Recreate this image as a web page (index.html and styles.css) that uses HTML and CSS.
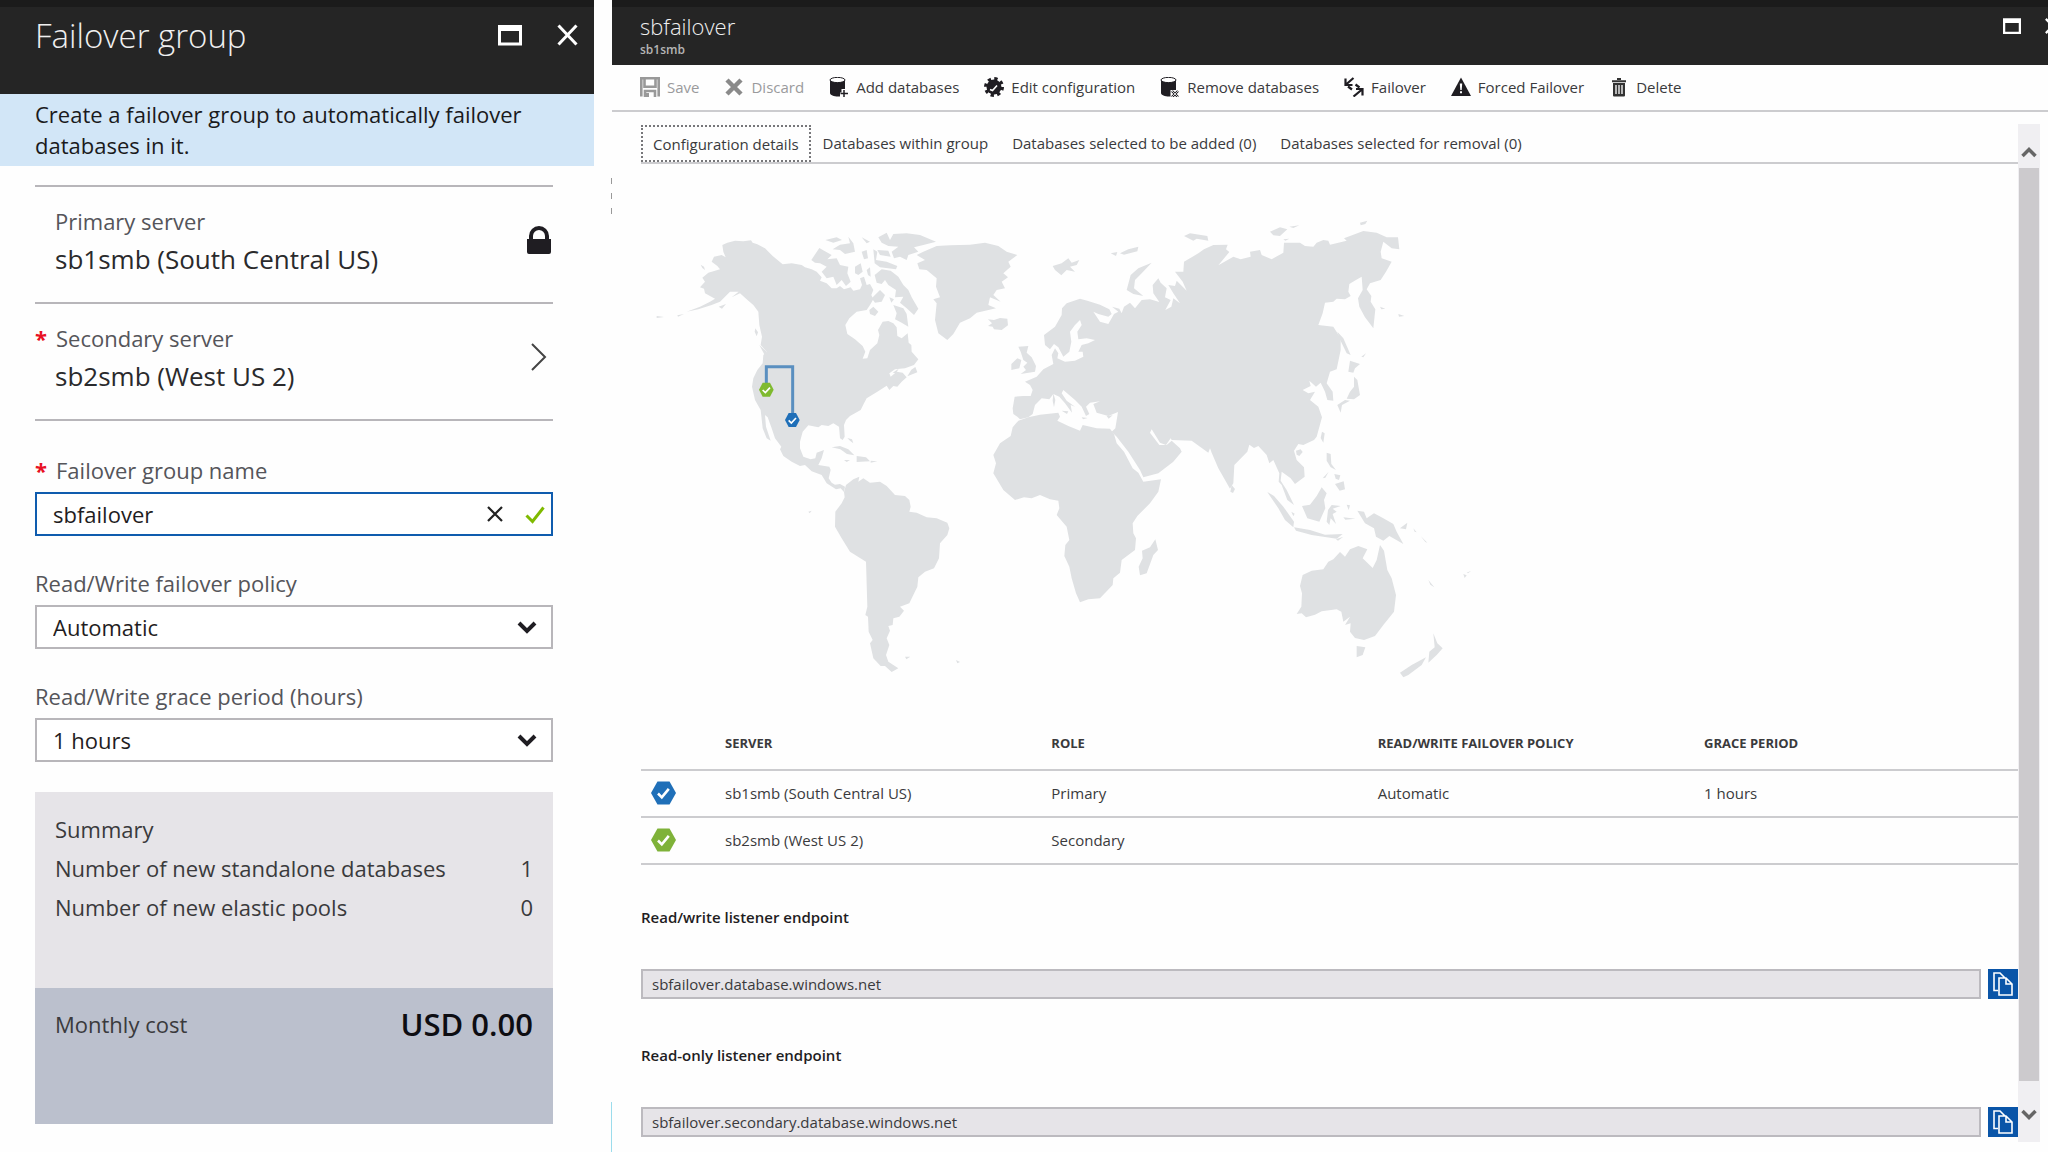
FILE: index.html
```html
<!DOCTYPE html>
<html lang="en">
<head>
<meta charset="utf-8">
<title>Failover group</title>
<link rel="stylesheet" href="styles.css">
</head>
<body>
<div class="portal">

  <aside class="blade create-blade">
    <header class="blade-header">
      <h1 class="blade-title">Failover group</h1>
      <div class="window-controls">
        <button class="icon-button" type="button" aria-label="Maximize">
          <svg class="control-icon" viewBox="0 0 24 24"><path fill="none" stroke="#fff" stroke-width="3" d="M1.500 3.500h21v17.500h-21z"/><path fill="#fff" d="M0 2h24v6H0z"/></svg>
        </button>
        <button class="icon-button" type="button" aria-label="Close">
          <svg class="control-icon" viewBox="0 0 24 24"><path stroke="#fff" stroke-width="3" d="M2.500 2.500l18 19M20.500 2.500l-18 19"/></svg>
        </button>
      </div>
    </header>
    <p class="notice">Create a failover group to automatically failover databases in it.</p>

    <form class="create-form">
      <div class="picker">
        <div class="picker-text">
          <span class="picker-label">Primary server</span>
          <span class="picker-value">sb1smb (South Central US)</span>
        </div>
        <svg class="picker-icon" viewBox="0 0 28 28"><path fill="#1f1d22" d="M2 13h2V10a9.500 9.500 0 0 1 20 0v3h2v13q0 2-2 2H4q-2 0-2-2zM8 13h12V10a6 6 0 0 0-12 0z"/></svg>
      </div>
      <button class="picker" type="button">
        <span class="picker-text">
          <span class="picker-label required">Secondary server</span>
          <span class="picker-value">sb2smb (West US 2)</span>
        </span>
        <svg class="picker-icon" viewBox="0 0 28 28"><path fill="none" stroke="#444" stroke-width="2" d="M7 1l13 13L7 27"/></svg>
      </button>

      <div class="fields">
        <div class="field">
          <label class="field-label required" for="group-name">Failover group name</label>
          <div class="control">
            <input class="input focused" id="group-name" type="text" value="sbfailover">
            <span class="input-icons">
              <svg class="input-icon" viewBox="0 0 20 20"><path stroke="#222" stroke-width="2.200" d="M3 3l14 14M17 3L3 17"/></svg>
              <svg class="input-icon" viewBox="0 0 20 20"><path fill="none" stroke="#7fba00" stroke-width="3" d="M1.500 11.500l6 6L18.500 3.500"/></svg>
            </span>
          </div>
        </div>
        <div class="field">
          <label class="field-label" for="policy">Read/Write failover policy</label>
          <div class="control">
            <select class="input" id="policy"><option>Automatic</option></select>
            <svg class="select-icon" viewBox="0 0 20 20"><path fill="none" stroke="#1f1d22" stroke-width="4" d="M2 6l8 8 8-8"/></svg>
          </div>
        </div>
        <div class="field">
          <label class="field-label" for="grace">Read/Write grace period (hours)</label>
          <div class="control">
            <select class="input" id="grace"><option>1 hours</option></select>
            <svg class="select-icon" viewBox="0 0 20 20"><path fill="none" stroke="#1f1d22" stroke-width="4" d="M2 6l8 8 8-8"/></svg>
          </div>
        </div>
      </div>

      <section class="summary">
        <div class="summary-row"><span>Summary</span></div>
        <div class="summary-row"><span>Number of new standalone databases</span><span>1</span></div>
        <div class="summary-row"><span>Number of new elastic pools</span><span>0</span></div>
      </section>
      <section class="cost summary-row"><span>Monthly cost</span><strong class="cost-value">USD 0.00</strong></section>
    </form>
  </aside>

  <div class="gutter">
    <span class="edge-marks"></span>
    <span class="edge-line"></span>
  </div>

  <main class="blade group-blade">
    <header class="blade-header compact">
      <div>
        <h2 class="blade-title">sbfailover</h2>
        <p class="blade-subtitle">sb1smb</p>
      </div>
      <div class="window-controls">
        <button class="icon-button" type="button" aria-label="Maximize">
          <svg class="control-icon" viewBox="0 0 24 24"><path fill="none" stroke="#fff" stroke-width="3" d="M1.500 3.500h21v17.500h-21z"/><path fill="#fff" d="M0 2h24v6H0z"/></svg>
        </button>
        <button class="icon-button" type="button" aria-label="Close">
          <svg class="control-icon" viewBox="0 0 24 24"><path stroke="#fff" stroke-width="3" d="M2.500 2.500l18 19M20.500 2.500l-18 19"/></svg>
        </button>
      </div>
    </header>

    <nav class="toolbar">
      <button class="tool" type="button" disabled>
        <svg class="tool-icon" viewBox="0 0 20 20"><path fill="none" stroke="#999" stroke-width="2.600" d="M1.300 19.500V1.300h17.400v18.200M4.500 1v8.700h11V1M5 20v-6h10v6"/><path fill="#999" d="M6 16h3v4H6z"/></svg>Save</button>
      <button class="tool" type="button" disabled>
        <svg class="tool-icon" viewBox="0 0 20 20"><path stroke="#8a8a8a" stroke-width="4.500" d="M3 3l14 14M17 3L3 17"/></svg>Discard</button>
      <button class="tool" type="button">
        <svg class="tool-icon" viewBox="0 0 20 20"><path fill="#1f1d22" d="M1 3v13c0 2 4 3.500 8 3.500h2v-4h1.500V12H16V3z"/><ellipse cx="8.500" cy="3" rx="7.500" ry="2.600" fill="#fff" stroke="#1f1d22"/><path stroke="#1f1d22" stroke-width="1.500" d="M15 13v7M11.500 16.500h7.500"/></svg>Add databases</button>
      <button class="tool" type="button">
        <svg class="tool-icon" viewBox="0 0 20 20"><circle cx="10" cy="10" r="7.500" fill="#1f1d22"/><circle cx="10" cy="10" r="8.400" fill="none" stroke="#1f1d22" stroke-width="3.200" stroke-dasharray="3.300 3.300"/><path fill="none" stroke="#fff" stroke-width="1.600" d="M6 12.500l2.500 1L13 8.500"/></svg>Edit configuration</button>
      <button class="tool" type="button">
        <svg class="tool-icon" viewBox="0 0 20 20"><path fill="#1f1d22" d="M1 3v13c0 2 4 3.500 8 3.500h1.500V13H16V3z"/><ellipse cx="8.500" cy="3" rx="7.500" ry="2.600" fill="#fff" stroke="#1f1d22"/><path stroke="#1f1d22" stroke-width="2.400" d="M12 14l6 6M18 14l-6 6"/><path stroke="#fff" stroke-width=".8" d="M12 14l6 6M18 14l-6 6"/></svg>Remove databases</button>
      <button class="tool" type="button">
        <svg class="tool-icon" viewBox="0 0 20 20"><path fill="none" stroke="#1f1d22" stroke-width="2.200" d="M1.500 1.500v6.500h7M2 7.500L9.500 1M18.500 18.500V12H12M18 12.500L9.500 19.500M4 9.500l4 3M11.500 7.500l4 3"/></svg>Failover</button>
      <button class="tool" type="button">
        <svg class="tool-icon" viewBox="0 0 20 20"><path fill="#1f1d22" d="M10 .5L20 19H0z"/><path fill="#fff" d="M8.800 6.500h2.400l-.5 6.500H9.300zM9 14.300h2v2H9z"/></svg>Forced Failover</button>
      <button class="tool" type="button">
        <svg class="tool-icon" viewBox="0 0 20 20"><path fill="#333" d="M3 3.200h14v2H3zM8 1h4v2H8zM4 6h12v12.500q0 1-1 1H5q-1 0-1-1z"/><path stroke="#fff" stroke-width="1.300" d="M7 8v9M10 8v9M13 8v9"/></svg>Delete</button>
    </nav>

    <div class="scroller">
      <div class="content">
        <div class="tabs" role="tablist">
          <button class="tab active" type="button" role="tab" aria-selected="true">Configuration details</button>
          <button class="tab" type="button" role="tab">Databases within group</button>
          <button class="tab" type="button" role="tab">Databases selected to be added (0)</button>
          <button class="tab" type="button" role="tab">Databases selected for removal (0)</button>
        </div>

        <svg class="map" viewBox="3 0 2520 1440" role="img" aria-label="World map">
          <g class="land">
            <!-- North and Central America -->
            <path d="M247 105L262 98 285 92 310 94 333 91 338 98 352 103 375 115 398 138 428 163 455 160 485 165 495 172 515 178 530 185 545 202 540 212 560 220 575 235 590 235 600 228 612 238 632 232 640 242 660 238 666 225 660 205 672 200 680 225 690 222 700 240 694 255 700 268 690 285 680 300 650 305 628 325 616 345 622 372 645 388 668 408 676 425 668 446 682 445 690 420 712 400 718 375 714 360 728 335 745 333 760 340 770 352 772 378 785 385 803 370 806 398 814 405 815 425 835 448 822 465 795 475 765 478 748 490 752 500 770 485 788 488 800 502 785 515 772 530 760 528 748 540 740 527 712 545 680 565 672 580 662 600 630 618 618 630 612 645 614 680 608 690 600 685 597 650 580 640 565 648 545 645 535 652 505 646 488 665 480 695 480 715 490 740 512 748 526 745 530 728 552 720 545 745 535 765 568 770 572 780 566 805 575 818 585 824 600 822 615 830 612 846 602 835 588 838 560 820 545 795 515 784 495 765 480 768 455 755 430 738 420 718 424 710 405 685 395 655 383 622 375 615 378 650 392 692 380 685 368 655 362 600 345 570 336 530 340 505 352 480 368 460 370 435 380 425 362 405 366 380 358 345 355 305 340 285 325 272 300 250 275 262 296 245 270 245 240 275 215 285 175 298 140 305 180 290 210 275 225 266 195 250 192 236 180 232 195 215 187 203 205 188 240 178 232 168 215 155 222 140 245 135 257 142 250 125Z"/>
            <path d="M182 164l10 6 3 10-8-6zM236 290l22-8-12 14zM50 318l22 3-22 3zM112 316l20-4-18 8zM346 355l8 12-4 12-6-14zM358 405l22 20-6 10z"/>
            <path d="M832 487l-30 12 12-20 12-8zM758 488l18-12-8 14zM575 712l25-4 25 10 18 18-22-4-20-14zM612 750h18l-10 6zM650 738l28 4 12 12-40 2zM692 752l20 2-20 4zM622 684l14 4 4 12-10-8z"/>
            <!-- Arctic archipelago -->
            <path d="M514 150L538 114 555 124 575 135 562 148 590 145 600 165 625 170 622 190 632 215 618 228 605 210 590 225 580 200 560 205 545 185 560 170 540 160 525 158ZM556 90L590 82 606 90 580 98ZM578 118L600 104 630 100 625 80 640 100 645 125 615 132 600 120ZM645 170L662 160 668 185 655 195 645 190ZM665 125L680 120 684 145 672 148ZM665 82L690 95 680 100ZM700 118L712 125 708 150 740 155 772 168 768 178 720 172 704 160ZM680 180L690 172 692 200 684 195Z"/>
            <path d="M715 82L740 68 750 90 760 72 800 70 840 75 888 95 850 105 822 112 835 125 805 135 800 150 780 140 762 145 755 125 775 110 745 108 725 98ZM712 120L745 122 752 140 720 135Z"/>
            <path d="M704 195L725 178 752 182 775 200 790 225 805 240 815 262 835 296 822 315 800 295 780 278 790 260 765 262 768 240 745 225 735 210 725 222 710 218ZM695 265L720 240 735 255 725 275 705 278ZM760 285L790 295 800 312 805 350 785 338 765 328 770 310ZM688 300L700 290 715 305 705 318 690 312ZM748 262l14 6-8 10z"/>
            <!-- Greenland and Iceland -->
            <path d="M830 135L850 125 890 108 930 106 990 104 1035 98 1075 108 1100 125 1132 135 1105 155 1112 170 1090 190 1104 202 1085 215 1095 235 1070 240 1060 255 1082 275 1050 262 1045 285 1068 295 1010 308 990 325 960 338 940 372 922 390 895 370 885 330 890 280 880 268 900 262 888 230 890 205 860 180 838 178 832 160 855 150Z"/>
            <path d="M1044 328L1062 330 1080 324 1102 326 1104 346 1085 360 1062 358 1058 350 1044 348 1056 340Z"/>
            <!-- South America -->
            <path d="M612 846L618 825 640 808 658 800 655 815 670 805 690 818 720 815 740 828 765 855 795 858 808 870 812 890 808 905 830 908 860 922 890 925 922 938 928 955 922 975 900 1000 897 1045 882 1075 855 1085 835 1102 832 1130 808 1180 780 1190 792 1202 778 1220 760 1225 758 1245 745 1248 750 1262 740 1285 748 1305 738 1335 745 1355 775 1375 755 1386 735 1368 722 1368 700 1345 690 1300 698 1290 686 1265 684 1220 676 1215 682 1190 678 1055 630 1025 605 985 585 950 586 905 605 880 614 862Z"/>
            <path d="M795 1340h16l-12 8zM948 1350l12 6-8 4zM505 905l10-3-6 8z"/>
          </g>
          <g class="land" transform="translate(1080 0)">
            <!-- Europe and Asia -->
            <path d="M40 612L38 595 44 560 70 558 92 558 98 540 90 525 75 515 110 500 130 478 160 462 155 435 165 415 175 430 172 445 195 455 225 452 250 440 248 425 235 425 245 405 265 400 285 390 260 385 235 388 232 365 245 345 240 330 225 345 210 365 214 395 208 425 190 440 175 412 162 402 150 418 135 405 132 375 165 350 185 315 186 295 200 280 240 266 262 272 300 284 328 298 335 312 325 320 295 312 280 305 300 335 325 342 342 312 355 305 336 290 358 296 365 310 372 290 390 278 405 295 425 270 450 268 478 276 460 250 458 225 475 205 482 218 500 235 495 262 512 270 496 300 514 290 520 265 540 280 520 250 505 225 525 228 530 212 560 242 548 215 525 185 550 185 552 155 595 130 612 118 640 105 683 104 678 118 688 126 655 166 700 140 722 148 752 140 750 125 780 120 785 135 815 148 850 128 852 98 900 98 915 108 940 110 950 98 970 90 985 92 990 104 1040 92 1032 85 1090 63 1130 68 1160 82 1194 82 1198 118 1175 115 1150 95 1142 125 1145 145 1175 155 1158 185 1142 210 1110 220 1100 238 1114 258 1112 275 1126 298 1120 355 1095 322 1078 290 1074 265 1088 240 1085 200 1064 212 1048 222 1045 245 1052 258 1035 268 1010 266 1000 275 975 278 968 310 955 345 1000 350 1022 385 1022 420 1010 478 990 485 980 520 998 545 1000 572 982 570 975 545 962 518 948 530 928 512 932 528 908 540 925 550 945 545 930 570 955 590 966 622 950 680 942 690 910 705 895 702 882 722 890 750 912 772 914 800 885 822 872 805 845 785 842 812 860 840 882 885 862 870 845 825 836 815 838 790 820 750 808 760 800 735 775 708 762 714 748 704 742 725 703 765 700 820 690 836 655 775 635 728 630 715 625 728 575 692 515 690 512 685 498 705 480 698 455 658 450 668 478 705 500 705 515 692 540 715 545 725 520 755 475 790 430 802 420 780 385 725 350 680 335 665 346 655 354 606 325 618 290 608 280 582 300 574 270 578 258 590 268 612 258 618 245 590 225 570 190 540 185 550 200 572 225 590 212 585 216 608 195 580 178 560 160 552 148 568 125 565 105 585 98 612 85 622 60 628 52 620Z"/>
            <path d="M695 825l10 12-6 12-8-4z"/>
            <path d="M160 550l6 20-4 22-4-20zM185 602l20 2-4 8zM245 622l18 2-14 4zM320 618l18-2-12 10z"/>
            <!-- British Isles -->
            <path d="M55 410L85 408 80 428 95 442 108 468 105 485 62 492 78 480 70 470 82 458 70 450 62 425ZM34 462L52 445 64 450 58 475 34 480Z"/>
            <!-- Arctic islands -->
            <path d="M380 240L392 195 415 175 455 158 425 190 405 210 402 235 430 258 400 252ZM158 168L185 160 205 145 215 158 238 150 230 165 210 170 225 185 200 180 184 196 165 180ZM332 130L352 126 348 138ZM360 130L385 118 415 110 412 124 372 134ZM552 78L570 70 622 78 625 92 590 86 580 92ZM810 65L840 52 862 58 840 78 820 76ZM868 50L898 46 880 54ZM850 88l18-2-12 6zM1080 38l22-6-6 10-14 4z"/>
            <!-- Africa and Madagascar -->
            <path d="M55 632L85 622 120 614 175 608 180 620 172 632 205 648 240 662 248 645 290 655 330 656 342 672 350 700 372 725 398 775 415 788 430 815 483 808 475 845 450 880 412 918 398 940 400 970 408 985 405 1020 365 1050 360 1088 340 1105 338 1125 300 1165 265 1168 240 1177 228 1150 215 1105 208 1070 193 1038 196 1005 208 990 200 950 170 915 178 895 175 872 150 868 120 855 95 865 72 862 45 870 10 840 -20 790 -12 760 -20 735 0 700 32 678 38 652Z"/>
            <path d="M466 988L474 1020 460 1035 440 1090 420 1096 416 1070 428 1045 426 1022 450 1012Z"/>
            <!-- Islands off East Asia -->
            <path d="M1012 365L1030 385 1052 435 1040 430 1018 385ZM1050 452L1080 462 1065 475 1060 488 1045 485ZM1062 500L1072 510 1080 555 1062 568 1040 566 1050 545 1062 530ZM1012 585L1035 570 1050 572 1026 585 1022 608ZM966 665l8 5-4 28-8-14zM888 722l14-4 6 8-10 12-8-4zM980 728l12 4 2 30 14 18-16-8-12-20zM1003 792l18 4-4 14-10-4zM1005 822l26-8 4 24-16 4zM1084 440l14-10-8 12zM1140 290l16 6-12 2zM1195 312l18 6-16 2zM968 805l18-20-10 18z"/>
            <!-- Indonesia and New Guinea -->
            <path d="M802 846L822 858 850 890 882 935 880 952 855 930 835 895ZM882 952L930 960 975 974 1028 972 1010 986 935 975 888 962ZM906 888L930 884 950 858 965 832 980 850 972 870 976 895 958 935 922 925ZM984 900L995 885 1022 888 998 896 1010 905 998 912 1008 942 992 925 988 945 980 935ZM1040 884l10 2-4 14zM1030 922l36 4-30 3zM1008 988l22-8-16 12zM874 905l10 6-4 8z"/>
            <path d="M1072 902L1092 905 1100 925 1122 910 1150 925 1180 942 1190 965 1210 1002 1180 985 1168 978 1150 992 1128 980 1122 955 1095 940ZM1200 955L1222 938 1218 958ZM1240 955l10 12-6-2zM1262 978l20 20-6-2zM1285 1110l18 22-12-8zM1390 1092l10 4-6 8zM1400 1088l14-6-10 8z"/>
            <!-- Australia and New Zealand -->
            <path d="M905 1210L890 1212 904 1190 906 1150 900 1128 908 1095 935 1082 970 1078 985 1055 1000 1048 1020 1026 1035 1040 1050 1018 1075 1008 1102 1018 1088 1045 1118 1074 1130 1050 1140 1005 1152 1022 1162 1080 1175 1105 1188 1155 1182 1205 1150 1245 1125 1278 1092 1290 1065 1284 1050 1265 1052 1240 1035 1245 1050 1220 1030 1235 1024 1205 1010 1198 965 1204 945 1214 918 1222ZM1070 1308L1096 1312 1088 1335 1070 1342Z"/>
            <path d="M1300 1270L1312 1300 1328 1315 1310 1335 1285 1358 1288 1325 1304 1312ZM1200 1388L1235 1365 1278 1342 1265 1365 1225 1395 1210 1402Z"/>
          </g>
          <path class="link" d="M379 520V470H458V610"/>
          <path fill="#7fba2f" d="M357 539l11-21h22l11 21-11 21h-22z"/><path class="tick" d="M368 540l8 8 14-15"/>
          <path fill="#1f6fb8" d="M435 630l11-21h22l11 21-11 21h-22z"/><path class="tick" d="M446 631l8 8 14-15"/>
        </svg>

        <table class="servers">
          <colgroup><col class="col-status"><col class="col-data"><col class="col-data"><col class="col-data"><col></colgroup>
          <thead>
            <tr><th></th><th>SERVER</th><th>ROLE</th><th>READ/WRITE FAILOVER POLICY</th><th>GRACE PERIOD</th></tr>
          </thead>
          <tbody>
            <tr>
              <td class="status"><svg class="hex" viewBox="0 0 25 24"><path fill="#1f6fb8" d="M0 12L6.500.5h12L25 12l-6.500 11.500h-12z"/><path fill="none" stroke="#fff" stroke-width="2.600" d="M7 12.500l3.800 3.800 7-8.500"/></svg></td>
              <td>sb1smb (South Central US)</td><td>Primary</td><td>Automatic</td><td>1 hours</td>
            </tr>
            <tr>
              <td class="status"><svg class="hex" viewBox="0 0 25 24"><path fill="#7fb239" d="M0 12L6.500.5h12L25 12l-6.500 11.500h-12z"/><path fill="none" stroke="#fff" stroke-width="2.600" d="M7 12.500l3.800 3.800 7-8.500"/></svg></td>
              <td>sb2smb (West US 2)</td><td>Secondary</td><td></td><td></td>
            </tr>
          </tbody>
        </table>

        <div class="endpoints">
          <div class="endpoint">
            <label class="endpoint-label" for="rw-endpoint">Read/write listener endpoint</label>
            <div class="endpoint-row">
              <input class="endpoint-input" id="rw-endpoint" type="text" readonly value="sbfailover.database.windows.net">
              <button class="copy" type="button" aria-label="Copy read/write endpoint"><svg class="copy-icon" viewBox="0 0 20 24"><path fill="none" stroke="#fff" stroke-width="1.600" d="M5 18.500H1V1h6l5 5M6 6h7l6 6v11H6zM13 6v6h6"/></svg></button>
            </div>
          </div>
          <div class="endpoint">
            <label class="endpoint-label" for="ro-endpoint">Read-only listener endpoint</label>
            <div class="endpoint-row">
              <input class="endpoint-input" id="ro-endpoint" type="text" readonly value="sbfailover.secondary.database.windows.net">
              <button class="copy" type="button" aria-label="Copy read-only endpoint"><svg class="copy-icon" viewBox="0 0 20 24"><path fill="none" stroke="#fff" stroke-width="1.600" d="M5 18.500H1V1h6l5 5M6 6h7l6 6v11H6zM13 6v6h6"/></svg></button>
            </div>
          </div>
        </div>
      </div>

      <div class="scrollbar" aria-hidden="true">
        <svg class="scroll-arrow up" viewBox="0 0 16 16"><path fill="none" stroke="#666" stroke-width="3.500" d="M1.500 12L8 5.500l6.500 6.500"/></svg>
        <span class="scroll-thumb"></span>
        <svg class="scroll-arrow down" viewBox="0 0 16 16"><path fill="none" stroke="#666" stroke-width="3.500" d="M1.500 4L8 10.500 14.500 4"/></svg>
      </div>
    </div>
  </main>
</div>
</body>
</html>
```
FILE: styles.css
```css
*, *::before, *::after {
  box-sizing: border-box;
}

body {
  margin: 0;
  background: #fefefe;
  color: #3a3a3c;
  font-family: "Open Sans", "Noto Sans", sans-serif;
  font-size: 15px;
}

h1, h2, p {
  margin: 0;
}

button, input, select {
  margin: 0;
  padding: 0;
  border: 0;
  border-radius: 0;
  background: none;
  color: inherit;
  font: inherit;
  text-align: left;
}

svg {
  display: block;
  flex: none;
}

.portal {
  display: grid;
  grid-template-columns: 594px 18px minmax(0, 1fr);
  min-height: 100vh;
}

.blade {
  display: flex;
  flex-direction: column;
  min-width: 0;
}

.blade-header {
  display: flex;
  justify-content: space-between;
  height: 94px;
  padding: 9px 14px 0 35px;
  overflow: hidden;
  border-top: 7px solid #1b1b1b;
  background: #252525;
  color: #f0f0f0;
}

.blade-title {
  font-size: 33px;
  font-weight: 300;
  line-height: 40px;
}

.window-controls {
  display: flex;
  align-items: flex-start;
  gap: 34px;
  padding-top: 7px;
}

.control-icon {
  width: 24px;
  height: 24px;
}

.compact {
  height: 65px;
  padding: 5px 0 0 28px;
}

.compact .blade-title {
  font-size: 22px;
  line-height: 28px;
}

.blade-subtitle {
  color: #b5b5b5;
  font-size: 12px;
  font-weight: 600;
  line-height: 20px;
}

.compact .window-controls {
  gap: 23px;
  margin-right: -14px;
  padding-top: 5px;
}

.compact .control-icon {
  width: 18px;
  height: 18px;
}

.notice {
  padding: 5px 40px 5px 35px;
  background: #d2e6f7;
  color: #1a1a1c;
  font-size: 22px;
  line-height: 31px;
}

/* Create form */

.create-form {
  padding: 19px 41px 28px 35px;
  font-size: 22px;
}

.picker {
  display: flex;
  align-items: center;
  justify-content: space-between;
  width: 100%;
  height: 117px;
  padding: 14px 0 23px 20px;
  border-top: 2px solid #b8b6ba;
}

button.picker {
  height: 119px;
  border-bottom: 2px solid #b8b6ba;
}

.picker-text {
  display: flex;
  flex-direction: column;
  line-height: 38px;
}

.picker-label,
.field-label {
  color: #55555a;
}

.picker-value {
  color: #2a2a2c;
  font-size: 26px;
}

.picker-icon {
  width: 28px;
  height: 28px;
}

.required::before {
  content: "*";
  display: inline-block;
  width: 21px;
  color: #e81123;
  font-weight: 700;
}

.picker .required {
  margin-left: -20px;
}

.fields {
  display: flex;
  flex-direction: column;
  gap: 33px;
  padding: 34px 0 30px;
}

.field {
  display: flex;
  flex-direction: column;
  gap: 8px;
}

.field-label {
  line-height: 28px;
}

.field:first-child {
  padding-top: 1px;
}

.control {
  display: grid;
  grid-template-areas: "box";
  align-items: center;
}

.input {
  grid-area: box;
  width: 100%;
  height: 44px;
  padding: 0 60px 0 16px;
  border: 2px solid #b8b6ba;
  background: #fff;
  color: #1f1d22;
  appearance: none;
  outline: none;
}

.focused {
  border-color: #0f5cae;
}

.input-icons,
.select-icon {
  grid-area: box;
  justify-self: end;
}

.input-icons {
  display: flex;
  gap: 20px;
  margin-right: 8px;
}

.input-icon {
  width: 20px;
  height: 20px;
}

.select-icon {
  width: 20px;
  height: 20px;
  margin-right: 16px;
  pointer-events: none;
}

.summary {
  padding: 18px 20px 61px;
  background: #e6e4e8;
}

.summary-row {
  display: flex;
  justify-content: space-between;
  line-height: 39px;
}

.cost {
  min-height: 136px;
  padding: 17px 20px;
  background: #bbc0cd;
}

.cost-value {
  color: #0d0d12;
  font-size: 31px;
  font-weight: 600;
}

/* Strip between the two blades */

.gutter {
  display: flex;
  flex-direction: column;
  align-items: flex-end;
  justify-content: space-between;
  padding-top: 178px;
}

.edge-marks {
  width: 1px;
  height: 37px;
  background: repeating-linear-gradient(#999 0 6px, transparent 6px 15px);
}

.edge-line {
  width: 1px;
  height: 50px;
  background: #9bdcec;
}

/* Group details */

.toolbar {
  display: flex;
  gap: 25px;
  height: 47px;
  padding: 0 0 2px 28px;
  border-bottom: 2px solid #cccccf;
}

.tool {
  display: flex;
  align-items: center;
  gap: 7px;
  white-space: nowrap;
}

.tool:disabled {
  color: #9a9a9c;
}

.tool-icon {
  width: 20px;
  height: 20px;
}

.scroller {
  display: flex;
  flex: 1;
}

.content {
  flex: 1;
  min-width: 0;
  padding: 13px 0 14px 29px;
}

.tabs {
  display: flex;
  border-bottom: 2px solid #cccccf;
}

.tab {
  height: 37px;
  padding: 0 12px 1px;
  white-space: nowrap;
}

.active {
  padding: 1px 10px 0;
  border: 2px dotted #77777a;
}

.map {
  width: 840px;
  height: 480px;
  max-width: 100%;
  margin-top: 46px;
}

.land {
  fill: #dfe1e3;
}

.link {
  fill: none;
  stroke: #5a8fc0;
  stroke-width: 9;
}

.tick {
  fill: none;
  stroke: #fff;
  stroke-width: 5;
}

.servers {
  width: 100%;
  margin-top: 27px;
  border-collapse: collapse;
  table-layout: fixed;
}

.servers th,
.servers td {
  height: 47px;
  padding: 0;
  border-bottom: 2px solid #cccccf;
  text-align: left;
}

.servers td {
  padding-bottom: 2px;
}

.servers th {
  height: 53px;
  font-size: 13px;
  font-weight: 700;
}

.col-status {
  width: 84px;
}

.col-data {
  width: 23.7%;
}

.servers .status {
  padding-left: 10px;
}

.hex {
  width: 25px;
  height: 24px;
}

.endpoints {
  display: flex;
  flex-direction: column;
  gap: 44px;
  margin-top: 40px;
}

.endpoint {
  display: flex;
  flex-direction: column;
  gap: 40px;
}

.endpoint-label {
  color: #1f1d22;
  font-weight: 600;
  line-height: 24px;
}

.endpoint-row {
  display: flex;
  gap: 7px;
}

.endpoint-input {
  flex: 1;
  height: 30px;
  padding: 0 9px;
  border: 2px solid #bcbabf;
  background: #e6e4e8;
}

.copy {
  display: grid;
  place-items: center;
  width: 30px;
  height: 30px;
  background: #0a55a8;
}

.copy-icon {
  width: 20px;
  height: 24px;
}

.scrollbar {
  display: flex;
  flex-direction: column;
  align-items: center;
  width: 22px;
  margin: 12px 8px 10px 0;
  background: #f0eff2;
}

.scroll-thumb {
  flex: 1;
  width: 20px;
  background: #cccacd;
}

.scroll-arrow {
  width: 16px;
  height: 16px;
}

.up {
  margin: 20px 0 8px;
}

.down {
  margin: 26px 0 19px;
}
```
